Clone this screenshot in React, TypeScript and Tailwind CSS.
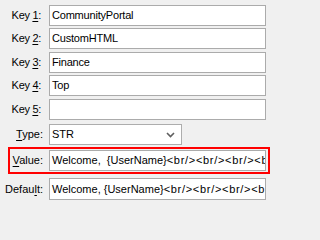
import React from 'react';

const font = { fontFamily: '"Liberation Sans", Arial, sans-serif' };

const Label = ({ pre, u, post, className = '' }: { pre: string; u: string; post: string; className?: string }) => (
  <span className={`text-[11px] leading-[13px] text-black whitespace-pre ${className}`}>
    {pre}
    <span className="underline underline-offset-[2px]">{u}</span>
    {post}
  </span>
);

const Box = ({ children, className = '' }: { children?: React.ReactNode; className?: string }) => (
  <div className={`h-[21px] border border-[#ababab] bg-white pl-[2px] flex items-center overflow-hidden ${className}`}>
    <span className="text-[11px] leading-[13px] text-black whitespace-pre">{children}</span>
  </div>
);

const keys = [
  { n: '1', v: 'CommunityPortal', mt: 'mt-[5px]' },
  { n: '2', v: 'CustomHTML', mt: 'mt-[2px]' },
  { n: '3', v: 'Finance', mt: 'mt-[3px]' },
  { n: '4', v: 'Top', mt: 'mt-[2px]' },
  { n: '5', v: '', mt: 'mt-[3px]' },
];

const Html = ({ lead }: { lead: string }) => (
  <>
    <span>{lead}</span>
    <span className="tracking-[0.7px]">{'<br/><br/><br/><br/><br/>'}</span>
  </>
);

export default function App() {
  return (
    <div className="min-h-screen bg-[#f0f0f0]" style={font}>
      <div className="w-[271px] h-[202px] overflow-hidden text-[11px] leading-[13px]">
        {keys.map((k) => (
          <div key={k.n} className={`flex items-center ${k.mt}`}>
            <div className="w-[41px] text-right">
              <Label pre="Key " u={k.n} post=":" className="tracking-[-0.3px]" />
            </div>
            <Box className="ml-[8px] w-[217px]">
              <span className="tracking-[-0.2px]">{k.v}</span>
            </Box>
          </div>
        ))}

        {/* type */}
        <div className="flex items-center mt-[4px]">
          <div className="w-[43px] text-right">
            <Label pre="" u="T" post="ype:" />
          </div>
          <div className="ml-[6px] w-[133px] h-[21px] border border-[#adadad] bg-white pl-[2px] pr-[5px] flex items-center justify-between">
            <span className="text-[11px] text-black">STR</span>
            <svg width="9" height="6" viewBox="0 0 9 6" className="mr-[1px]">
              <path d="M1 1 L4.5 4.5 L8 1" fill="none" stroke="#5f5f5f" strokeWidth="1.6" />
            </svg>
          </div>
        </div>

        {/* value, highlighted */}
        <div className="ml-[8px] mt-[2px] w-[262px] border-2 border-[#ff0000] py-[1px] flex items-center">
          <div className="w-[33px] text-right">
            <Label pre="" u="V" post="alue:" />
          </div>
          <Box className="ml-[6px] w-[217px]">
            <Html lead="Welcome,  {UserName}" />
          </Box>
        </div>

        {/* default */}
        <div className="flex items-center mt-[4px]">
          <div className="w-[43px] text-right">
            <Label pre="Defau" u="l" post="t:" />
          </div>
          <Box className="ml-[6px] w-[217px] h-[22px]">
            <Html lead="Welcome, {UserName}" />
          </Box>
        </div>
      </div>
    </div>
  );
}
